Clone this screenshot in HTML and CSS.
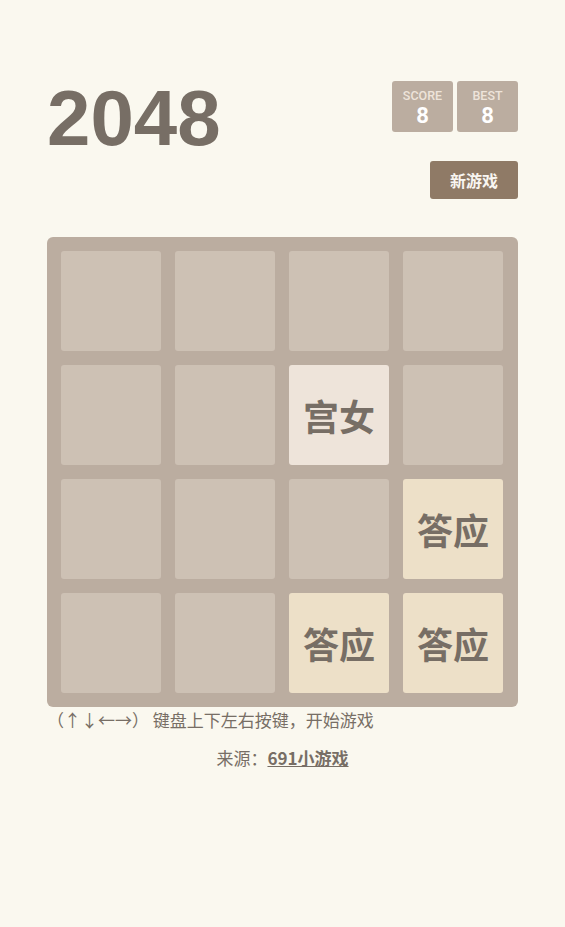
FILE: index.html
```html
<!DOCTYPE html>
<html lang="zh">
<head>
<meta charset="utf-8">
<title>2048</title>
<link rel="stylesheet" href="styles.css">
</head>
<body>
<div class="container">
  <div class="heading">
    <h1 class="title">2048</h1>
    <div class="scores">
      <div class="score-box"><span class="label">SCORE</span><span class="value">8</span></div>
      <div class="score-box"><span class="label">BEST</span><span class="value">8</span></div>
    </div>
  </div>
  <div class="above-game">
    <a class="restart-button">新游戏</a>
  </div>
  <div class="board">
    <div class="cell"></div><div class="cell"></div><div class="cell"></div><div class="cell"></div>
    <div class="cell"></div><div class="cell"></div><div class="cell tile-2">宫女</div><div class="cell"></div>
    <div class="cell"></div><div class="cell"></div><div class="cell"></div><div class="cell tile-4">答应</div>
    <div class="cell"></div><div class="cell"></div><div class="cell tile-4">答应</div><div class="cell tile-4">答应</div>
  </div>
  <p class="explanation">（↑↓←→） 键盘上下左右按键，开始游戏</p>
  <p class="source">来源：<a class="source-link">691小游戏</a></p>
</div>
</body>
</html>
```

FILE: styles.css
```css
html, body {
  margin: 0;
  padding: 0;
  background: #faf8ef;
  color: #776e65;
  font-family: "Liberation Sans", Arial, "Noto Sans CJK SC", sans-serif;
}

.container {
  width: 471px;
  margin: 0 auto;
  padding-top: 81px;
}

.heading {
  display: flex;
  justify-content: space-between;
  align-items: flex-start;
  height: 75px;
}

.title {
  margin: -3px 0 0 0;
  font-size: 78px;
  line-height: 80px;
  font-weight: bold;
  color: #776e65;
}

.scores {
  display: flex;
  gap: 4px;
}

.score-box {
  width: 61px;
  height: 51px;
  background: #bbada0;
  border-radius: 3px;
  display: flex;
  flex-direction: column;
  align-items: center;
  box-sizing: border-box;
  padding-top: 8px;
  font-family: Roboto, "Liberation Sans", sans-serif;
}

.label {
  font-size: 12.5px;
  line-height: 14px;
  font-weight: 500;
  color: #eee4da;
}

.value {
  font-size: 22px;
  line-height: 26px;
  font-weight: bold;
  color: #ffffff;
}

.above-game {
  display: flex;
  justify-content: flex-end;
  margin-top: 5px;
}

.restart-button {
  display: block;
  width: 88px;
  height: 38px;
  line-height: 38px;
  text-align: center;
  background: #8f7a66;
  color: #f9f6f2;
  border-radius: 3px;
  font-size: 16px;
  font-weight: bold;
  font-family: "Noto Sans CJK SC", sans-serif;
}

.board {
  margin-top: 38px;
  background: #bbada0;
  border-radius: 6px;
  padding: 14px;
  width: 471px;
  box-sizing: border-box;
  display: grid;
  grid-template-columns: repeat(4, 100px);
  grid-auto-rows: 100px;
  gap: 14px;
}

.cell {
  background: #cdc1b4;
  border-radius: 3px;
  display: flex;
  align-items: center;
  justify-content: center;
  font-family: "Noto Sans CJK SC", sans-serif;
  font-weight: bold;
  font-size: 36px;
  color: #776e65;
}

.tile-2 { background: #eee4da; }
.tile-4 { background: #ede0c8; }

.explanation {
  margin: 1px 0 0 0;
  font-family: "Noto Sans CJK SC", sans-serif;
  font-size: 17px;
  line-height: 24px;
  color: #776e65;
}

.source {
  margin: 14px 0 0 0;
  text-align: center;
  font-family: "Noto Sans CJK SC", sans-serif;
  font-size: 17px;
  line-height: 24px;
  color: #776e65;
}

.source-link {
  font-weight: bold;
  text-decoration: underline;
  color: #776e65;
}
```
